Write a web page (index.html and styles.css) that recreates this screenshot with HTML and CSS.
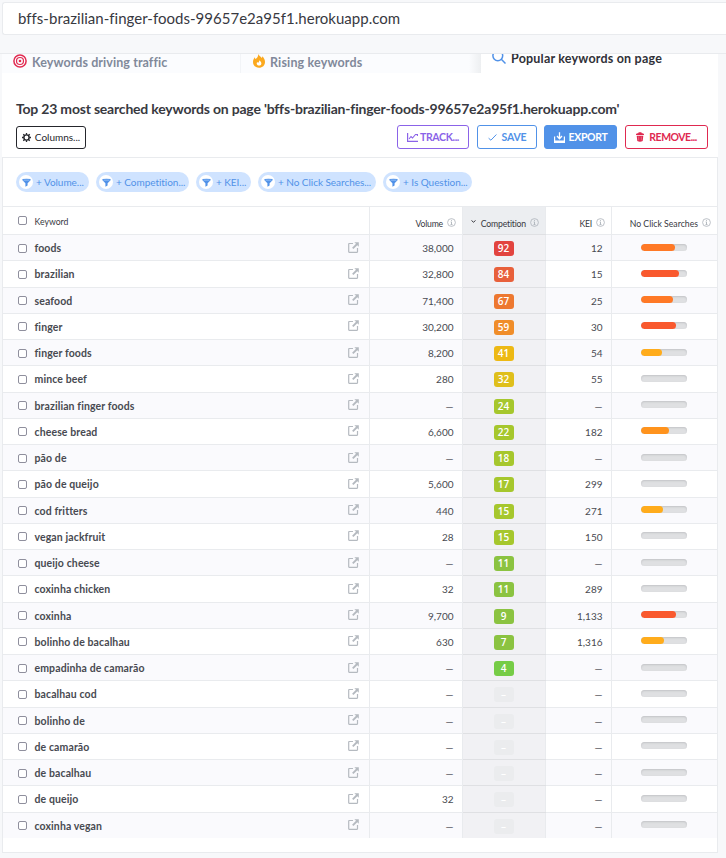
FILE: index.html
```html
<!DOCTYPE html>
<html lang="en">
<head>
<meta charset="utf-8">
<title>Popular keywords on page</title>
<link rel="stylesheet" href="styles.css">
</head>
<body>
<svg class="defs" aria-hidden="true">
  <symbol id="open" viewBox="0 0 11 11"><path d="M5 1.500H1.200a.5.5 0 0 0-.5.5v7.800c0 .3.2.5.5.5H9c.3 0 .5-.2.5-.5V6" fill="none" stroke="currentColor" stroke-width="1.200"/><path d="M6.300.2h4.500v4.500L9.300 3.200 5.400 7.100 4.100 5.800 8 1.800Z" fill="currentColor"/></symbol>
  <symbol id="info" viewBox="0 0 9 9"><circle cx="4.500" cy="4.500" r="3.900" fill="none" stroke="currentColor" stroke-width=".8"/><path d="M4.500 1.900v1M3.700 3.900h.8v2.700M3.500 6.600h2" fill="none" stroke="currentColor" stroke-width=".9"/></symbol>
  <symbol id="funnel" viewBox="0 0 10 10"><path d="M.5 1.200Q5 .2 9.500 1.200V2.400L6.200 5.800V8.300L3.800 9.600V5.800L.5 2.400Z" fill="currentColor"/><path d="M1.700 2.400h6.600" stroke="#a9cdfa" stroke-width=".8"/></symbol>
</svg>
<header class="top"><div class="address">bffs-brazilian-finger-foods-99657e2a95f1.herokuapp.com</div></header>
<main class="page">
  <nav class="tabs">
    <div class="tab"><svg width="14" height="14" viewBox="0 0 14 14" fill="none" stroke="#e22a50"><circle cx="7" cy="7" r="6.100" stroke-width="1.500"/><circle cx="7" cy="7" r="3.500" stroke-width="1.200"/><circle cx="7" cy="7" r="1.300" fill="#e22a50" stroke="none"/></svg><span class="t-driving">Keywords driving traffic</span></div>
    <div class="tab second"><svg width="12" height="14" viewBox="0 0 12 14"><path d="M5.300 0C6 2 8 2.600 8.700 4c.5-.5.6-1.100.6-1.700C11 4 12 5.700 12 8c0 3.400-2.500 5.800-6 5.800S0 11.400 0 8c0-2.200.9-3.700 1.900-4.800 0 .9.3 1.500.8 1.900C4.300 3.800 5.300 2.200 5.300 0Z" fill="#fba91f"/><path d="M6.200 5.800c.2 1 1.200 1.400 1.700 2.100.5.700.6 1.300.4 2-.3 1-1.100 1.700-2.300 1.700s-2.300-.8-2.300-2.100c0-.7.2-1.200.5-1.600.3.500.6.8 1 .8.800-.4 1.200-1.600 1-2.900Z" fill="#fff"/></svg><span class="t-rising">Rising keywords</span></div>
    <div class="tab active"><svg width="14" height="14" viewBox="0 0 14 14" fill="none" stroke="#5192e8" stroke-width="1.500"><circle cx="5.800" cy="5.800" r="4.900"/><path d="m9.300 9.300 4.200 4.200"/></svg><span class="t-popular">Popular keywords on page</span></div>
  </nav>
  <section class="intro">
    <h1><span>Top 23 most searched keywords on page 'bffs-brazilian-finger-foods-99657e2a95f1.herokuapp.com'</span></h1>
    <div class="toolbar">
      <button class="btn columns"><svg width="9" height="9" viewBox="0 0 9 9" fill="none" stroke="currentColor"><circle cx="4.500" cy="4.500" r="2.600" stroke-width="1.400"/><path d="M4.500 0v1.800M4.500 7.200V9M0 4.500h1.800M7.200 4.500H9M1.300 1.300l1.200 1.200M6.500 6.500l1.200 1.200M1.300 7.700l1.200-1.200M6.500 2.500l1.200-1.200" stroke-width="1.300"/></svg><span>Columns...</span></button>
      <button class="btn track"><svg width="11" height="9" viewBox="0 0 11 9" fill="none" stroke="currentColor"><path d="M.6 0v8.400H11" stroke-width="1.200"/><path d="m2 6 2-2.500L5.500 5l3-3.500H11M10.400 1v2" stroke-width="1.100"/></svg><span>TRACK...</span></button>
      <button class="btn save"><svg width="9" height="9" viewBox="0 0 9 9" fill="none" stroke="currentColor"><path d="m.6 5.200 2.300 2L8.400 1.500" stroke-width="1"/></svg><span>SAVE</span></button>
      <button class="btn export"><svg width="11" height="11" viewBox="0 0 11 11" fill="none" stroke="currentColor"><path d="M.6 4.500v5.800h9.800V4.500M.8 9.200h9.400" stroke-width="1.200"/><path d="M5.500.2v6M3 4l2.500 2.800L8 4" stroke-width="1.300"/></svg><span>EXPORT</span></button>
      <button class="btn remove"><svg width="8" height="10" viewBox="0 0 8 10"><path d="M0 2.200C.3 1.500 1.200 1.300 2.200 1.200L2.700.2h2.600l.5 1c1 .1 1.900.3 2.200 1v.8H0ZM.7 3.700h6.600l-.6 5.200Q4 10.400 1.300 8.900Z" fill="currentColor"/><path d="M2.700 4.500v3.800M5.300 4.500v3.800" stroke="#f18fa4" stroke-width=".6"/></svg><span>REMOVE...</span></button>
    </div>
  </section>
  <section class="panel">
    <div class="filters">
      <div class="chip volume"><i><svg><use href="#funnel"/></svg></i><span>+ Volume...</span></div>
      <div class="chip competition"><i><svg><use href="#funnel"/></svg></i><span>+ Competition...</span></div>
      <div class="chip kei"><i><svg><use href="#funnel"/></svg></i><span>+ KEI...</span></div>
      <div class="chip searches"><i><svg><use href="#funnel"/></svg></i><span>+ No Click Searches...</span></div>
      <div class="chip question"><i><svg><use href="#funnel"/></svg></i><span>+ Is Question...</span></div>
    </div>
    <div class="row head">
      <div class="cell keyword"><input type="checkbox"><span>Keyword</span></div>
      <div class="cell num">Volume<svg class="info"><use href="#info"/></svg></div>
      <div class="cell comp"><svg class="caret" viewBox="0 0 5 3"><path d="m.5.500 2 1.700 2-1.700" fill="none" stroke="currentColor"/></svg>Competition<svg class="info"><use href="#info"/></svg></div>
      <div class="cell num">KEI<svg class="info"><use href="#info"/></svg></div>
      <div class="cell clicks">No Click Searches<svg class="info"><use href="#info"/></svg></div>
    </div>
    <div id="rows"></div>
  </section>
</main>
<script src="rows.js"></script>
</body>
</html>
```
FILE: styles.css
```css
* { box-sizing: border-box; }
body { margin: 0; background: #f7f8fa; font-family: Lato, "Open Sans", sans-serif; color: #38393f; height: 858px; overflow: hidden; }
.defs { display: none; }
span { white-space: nowrap; }
.top { height: 54px; padding: 2px 0 0 2px; border-bottom: 1px solid #e9ebee; }
.address { height: 33px; border: 1px solid #e9ebee; border-right: 0; border-radius: 3px 0 0 3px; background: #fff; padding-left: 15px; font-size: 15px; letter-spacing: .02px; line-height: 31px; white-space: nowrap; }
.page { width: 716px; margin-left: 2px; background: #fff; }
.tabs { height: 19px; display: grid; grid-template-columns: 238px 241px 237px; overflow: hidden; }
.tab { display: flex; align-items: flex-start; padding-left: 11px; background: #fbfcfe; color: #81899a; font-size: 12.5px; letter-spacing: .08px; font-weight: 700; line-height: 17px; }
.tab svg { flex: none; margin-right: 5px; }
.tab.second { padding-left: 12px; border-left: 1px solid #f2f4f7; background: linear-gradient(90deg, #fbfcfe 95%, #edeff1); }
.t-rising { letter-spacing: .15px; }
.tab.active { background: #fff; color: #303138; }
.t-popular { line-height: 10px; letter-spacing: .2px; }
.tab.active svg { margin-top: -4px; }
.intro { height: 84px; padding: 27px 10px 0 14px; }
h1 { margin: 0; font-size: 14px; letter-spacing: -.2px; line-height: 17px; font-weight: 700; height: 25px; }
.toolbar { display: flex; align-items: center; height: 24px; }
.btn { height: 24px; padding: 0; border: 1px solid currentColor; border-radius: 3px; background: #fff; display: flex; align-items: center; justify-content: center; gap: 4px; font: 700 10.5px Lato, sans-serif; }
.btn.columns { width: 70px; height: 23px; margin-right: auto; color: #25262c; font-weight: 400; font-size: 10px; }
.track { width: 72px; color: #8b63e8; margin-right: 8px; gap: 2px; letter-spacing: -.35px; }
.save { width: 60px; color: #5192e8; margin-right: 7px; gap: 5px; letter-spacing: -.2px; }
.export { width: 73px; color: #fff; background: #5192e8; border-color: #5192e8; margin-right: 8px; letter-spacing: -.35px; }
.remove { width: 83px; color: #df2950; gap: 5px; letter-spacing: -.5px; }
.panel { height: 696px; border: 1px solid #e9ebee; width: 716px; }
.filters { display: flex; height: 48px; padding: 14px 0 0 13px; }
.chip { height: 20px; border-radius: 10px; background: #cfe3ff; color: #5192e8; font-size: 10px; letter-spacing: -.04px; line-height: 18px; display: flex; align-items: center; padding-left: 3px; margin-right: 7px; gap: 3px; }
.chip span { margin-top: -1px; }
.chip i { width: 14px; height: 14px; border-radius: 50%; background: #fff; display: grid; place-items: center; }
.chip svg { width: 9px; height: 9px; }
.volume { width: 73px; } .competition { width: 93px; } .kei { width: 55px; } .searches { width: 118px; } .question { width: 89px; }
.row { display: grid; grid-template-columns: 367px 93px 83px 66px 105px; height: 26.26px; font-size: 10px; border-top: 1px solid #e9ebee; }
#rows .row:nth-child(odd) { background: #fafafd; }
#rows .row:nth-child(even) { background: #fff; }
.row.head { height: 28px; font-size: 8.7px; background: #fff; }
.cell { display: flex; align-items: center; border-right: 1px solid #e9ebee; }
.cell:last-child { border: 0; }
.keyword { padding-left: 15px; }
.keyword span { margin-left: 7.5px; }
.head .keyword span { margin-top: 1px; }
#rows .keyword { padding-top: 1px; }
#rows .keyword span { font-weight: 700; font-size: 10.5px; letter-spacing: .11px; color: #484a51; }
input { appearance: none; flex: none; width: 9px; height: 9px; margin: 0; border: 1px solid #8f8f9d; border-radius: 2px; background: #fff; }
.openicon { width: 11px; height: 11px; color: #b5bac0; margin: 0 10px 2px auto; }
.num { justify-content: flex-end; padding: 1px 8.5px 0 0; color: #484a51; }
.comp { justify-content: center; background: #f1f1f4; box-shadow: 0 -1px #dfe0e3; padding-right: 1px; }
.badge { width: 20px; height: 15px; margin-top: 2px; border-radius: 3px; color: #fff; display: grid; place-items: center; font: 600 10px/15px "Open Sans", sans-serif; }
.clicks { justify-content: center; padding-bottom: 1px; padding-right: 1px; }
.meter { width: 46px; height: 7px; border-radius: 4px; overflow: hidden; background: #dfe0e2; box-shadow: inset 0 1px 2px #c3c4c7; }
.meter b { display: block; height: 7px; border-radius: 4px; }
.head .cell { color: #38393f; white-space: nowrap; }
.head .num, .head .comp, .head .clicks { justify-content: flex-end; padding: 5px 6px 0 0; }
.head .comp { background: #eceef1; box-shadow: none; }
.head .comp, .head .num { letter-spacing: -.2px; }
.info { width: 9px; height: 9px; margin: -1px 0 0 4px; color: #adb3ba; flex: none; }
.caret { width: 5px; height: 3px; margin: 0 5px 4px 0; }
```
FILE: rows.js
```javascript
const keywords = [
  ["foods", "38,000", 92, "#e2443f", "12", 34, "#ff7926"],
  ["brazilian", "32,800", 84, "#e8603b", "15", 38, "#f9592e"],
  ["seafood", "71,400", 67, "#ed7830", "25", 32, "#ff7926"],
  ["finger", "30,200", 59, "#f08d29", "30", 35, "#f9592e"],
  ["finger foods", "8,200", 41, "#edb914", "54", 21, "#ffac1c"],
  ["mince beef", "280", 32, "#dfbf1b", "55", 0],
  ["brazilian finger foods", "—", 24, "#a6c72d", "—", 0],
  ["cheese bread", "6,600", 22, "#a6c72d", "182", 28, "#ff931d"],
  ["pão de", "—", 18, "#a6c72d", "—", 0],
  ["pão de queijo", "5,600", 17, "#a6c72d", "299", 0],
  ["cod fritters", "440", 15, "#a6c72d", "271", 22, "#ffac1c"],
  ["vegan jackfruit", "28", 15, "#a6c72d", "150", 0],
  ["queijo cheese", "—", 11, "#8bc341", "—", 0],
  ["coxinha chicken", "32", 11, "#8bc341", "289", 0],
  ["coxinha", "9,700", 9, "#8bc341", "1,133", 35, "#f9592e"],
  ["bolinho de bacalhau", "630", 7, "#8bc341", "1,316", 23, "#ffac1c"],
  ["empadinha de camarão", "—", 4, "#76cc46", "—", 0],
  ["bacalhau cod", "—", "–", "#ebecee", "—", 0],
  ["bolinho de", "—", "–", "#ebecee", "—", 0],
  ["de camarão", "—", "–", "#ebecee", "—", 0],
  ["de bacalhau", "—", "–", "#ebecee", "—", 0],
  ["de queijo", "32", "–", "#ebecee", "—", 0],
  ["coxinha vegan", "—", "–", "#ebecee", "—", 0]
];
document.getElementById("rows").innerHTML = keywords.map(([name, volume, score, tint, kei, level, shade]) => `
  <div class="row">
    <div class="cell keyword"><input type="checkbox"><span>${name}</span><svg class="openicon"><use href="#open"/></svg></div>
    <div class="cell num">${volume}</div>
    <div class="cell comp"><div class="badge" style="background:${tint}">${score}</div></div>
    <div class="cell num">${kei}</div>
    <div class="cell clicks"><div class="meter">${level ? `<b style="width:${level}px;background:${shade}"></b>` : ""}</div></div>
  </div>`).join("");
```
